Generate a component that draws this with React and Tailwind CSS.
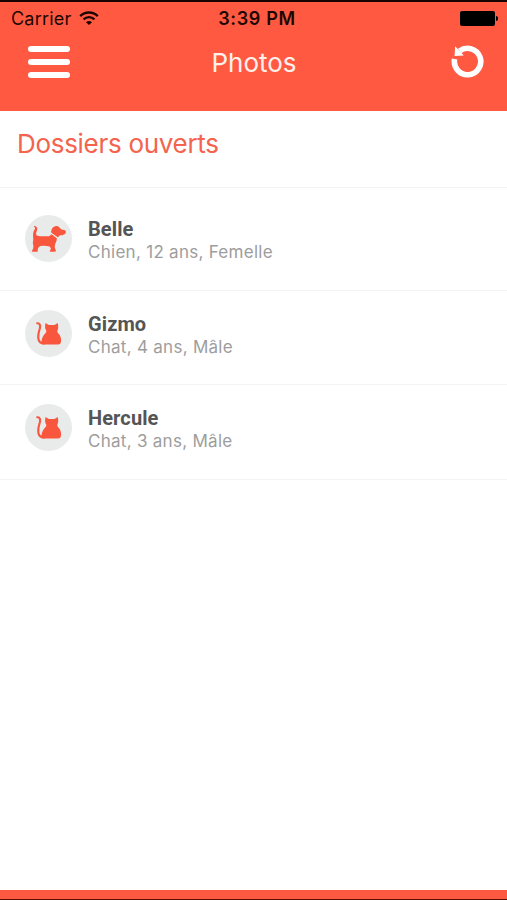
import React from 'react';

const animals = [
  { name: 'Belle', details: 'Chien, 12 ans, Femelle', type: 'dog' },
  { name: 'Gizmo', details: 'Chat, 4 ans, Mâle', type: 'cat' },
  { name: 'Hercule', details: 'Chat, 3 ans, Mâle', type: 'cat' },
];

const DogIcon = () => (
  <svg viewBox="2 0 142 142" className="w-full h-full" fill="#f9573d">
    <path d="M29 33 C35 32 40 37 39 43 C38 49 34 55 36 60 C38 63 43 64 48 64 L74 64 C77 63 79 61 82 58 L98 70 C99 77 95 82 93 88 C91 95 92 102 95 106 C96 109 95 111 92 111 H79 C76 111 76 108 79 106 C81 102 80 98 76 95 C67 93 53 92 46 95 C42 98 39 103 41 108 C41 110 40 111 38 111 H25 C22 111 22 108 25 105 C28 100 28 94 26 87 C25 82 27 78 27 73 C26 66 26 59 27 53 C28 47 34 43 32 38 C31 36 28 35 29 33 Z" />
    <path d="M84 41 C89 32 101 31 106 38 L111 43 L123 46 C126 48 126 53 124 56 C120 61 113 62 108 61 L101 67 L86 57 C83 55 80 52 81 49 C82 46 83 44 84 41 Z" />
  </svg>
);

const CatIcon = () => (
  <svg viewBox="2 0 142 142" className="w-full h-full" fill="#f9573d">
    <path
      d="M39 40 C47 39 49 47 47 55 C44 65 41 73 42 84 C43 95 48 101 60 101"
      fill="none"
      stroke="#f9573d"
      strokeWidth="6.5"
      strokeLinecap="round"
    />
    <path d="M64 39 L74 45 H91 L101 39 C103 48 103 56 100 62 C99 65 100 68 103 71 C109 77 111 84 111 93 C111 101 108 104 102 104 H56 C52 104 51 99 52 93 C53 85 57 77 63 71 C66 68 67 65 66 62 C62 56 62 48 64 39 Z" />
  </svg>
);

const WifiIcon = () => (
  <svg viewBox="0 0 20 15" className="w-5 h-[15px]" fill="none" stroke="#1d0500" strokeWidth="2.4">
    <path d="M1.2 5.1 C6.2 0.2 13.8 0.2 18.8 5.1" />
    <path d="M4.5 8.4 C7.7 5.4 12.3 5.4 15.5 8.4" />
    <path d="M10 14 L7 11.2 C8.8 9.6 11.2 9.6 13 11.2 Z" fill="#1d0500" stroke="none" />
  </svg>
);

const RefreshIcon = () => (
  <svg viewBox="0 0 34 34" className="w-[34px] h-[34px]">
    <path d="M4.6 14 A13.2 13.2 0 1 0 9.6 6" fill="none" stroke="white" strokeWidth="5.6" />
    <path d="M5.2 1.2 L13.8 10.4 L4.6 10.9 Z" fill="white" />
  </svg>
);

const StatusBar = () => (
  <div className="grid grid-cols-3 items-center h-8 pl-[11px] pr-[9px] text-[#1d0500]">
    <div className="flex items-center gap-2">
      <span className="text-[18px] tracking-[0.2px]">Carrier</span>
      <WifiIcon />
    </div>
    <span className="pl-[5px] text-center text-[18px] tracking-[0.65px] font-semibold whitespace-nowrap">
      3:39 PM
    </span>
    <div className="flex items-center justify-end gap-px">
      <div className="w-[35px] h-[15px] rounded-[2px] bg-black" />
      <div className="w-0.5 h-[5px] rounded-r-full bg-black" />
    </div>
  </div>
);

const Header = () => (
  <header className="h-[111px] bg-[#ff5a41] border-t-2 border-[#190300]">
    <StatusBar />
    <div className="grid grid-cols-3 items-center h-14 pl-7 pr-[23px]">
      <button aria-label="Menu" className="flex flex-col gap-[7px] w-[42px]">
        <span className="h-1.5 rounded-full bg-white" />
        <span className="h-1.5 rounded-full bg-white" />
        <span className="h-1.5 rounded-full bg-white" />
      </button>
      <h1 className="pr-1 text-center text-[26px] text-[#fff0ec]">Photos</h1>
      <button aria-label="Actualiser" className="justify-self-end">
        <RefreshIcon />
      </button>
    </div>
  </header>
);

const AnimalRow = ({ animal }) => (
  <li className="flex items-center gap-4 h-[94.5px] pl-[25px] pb-2 border-b border-[#f3f3f3]">
    <div className="w-[47px] h-[47px] rounded-full bg-[#e9eaea]">
      {animal.type === 'dog' ? <DogIcon /> : <CatIcon />}
    </div>
    <div className="pt-1">
      <div className="font-['Roboto',sans-serif] text-[20px] leading-6 tracking-[0.1px] font-bold text-[#555555]">
        {animal.name}
      </div>
      <div className="text-[17px] leading-[23px] tracking-[0.28px] text-[#9d9d9d]">{animal.details}</div>
    </div>
  </li>
);

export default function App() {
  return (
    <div className="flex flex-col h-screen bg-white font-['Inter',sans-serif]">
      <Header />
      <main className="flex-1">
        <h2 className="h-[77px] pt-[13px] pl-[17px] border-b border-[#f3f3f3] text-[26px] leading-10 tracking-[-0.3px] text-[#f4634d]">
          Dossiers ouverts
        </h2>
        <ul className="pt-2">
          {animals.map((animal) => (
            <AnimalRow key={animal.name} animal={animal} />
          ))}
        </ul>
      </main>
      <footer className="h-2.5 bg-[#ff5a41] border-b border-[#5c0d00]" />
    </div>
  );
}
